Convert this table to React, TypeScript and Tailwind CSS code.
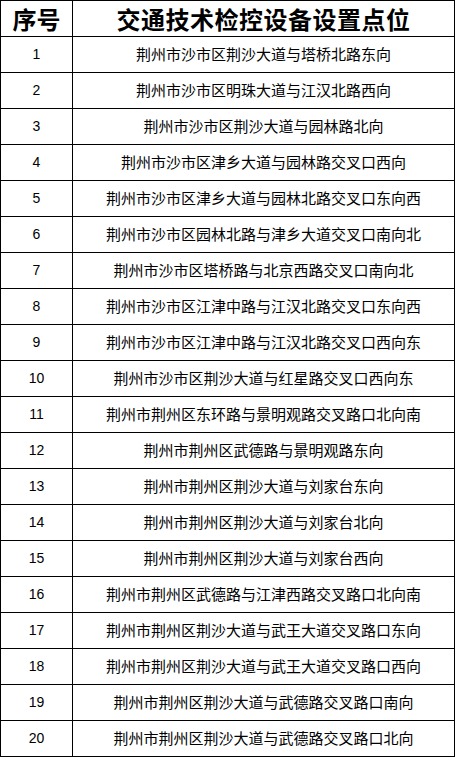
const rows: string[] = [
  "荆州市沙市区荆沙大道与塔桥北路东向",
  "荆州市沙市区明珠大道与江汉北路西向",
  "荆州市沙市区荆沙大道与园林路北向",
  "荆州市沙市区津乡大道与园林路交叉口西向",
  "荆州市沙市区津乡大道与园林北路交叉口东向西",
  "荆州市沙市区园林北路与津乡大道交叉口南向北",
  "荆州市沙市区塔桥路与北京西路交叉口南向北",
  "荆州市沙市区江津中路与江汉北路交叉口东向西",
  "荆州市沙市区江津中路与江汉北路交叉口西向东",
  "荆州市沙市区荆沙大道与红星路交叉口西向东",
  "荆州市荆州区东环路与景明观路交叉路口北向南",
  "荆州市荆州区武德路与景明观路东向",
  "荆州市荆州区荆沙大道与刘家台东向",
  "荆州市荆州区荆沙大道与刘家台北向",
  "荆州市荆州区荆沙大道与刘家台西向",
  "荆州市荆州区武德路与江津西路交叉路口北向南",
  "荆州市荆州区荆沙大道与武王大道交叉路口东向",
  "荆州市荆州区荆沙大道与武王大道交叉路口西向",
  "荆州市荆州区荆沙大道与武德路交叉路口南向",
  "荆州市荆州区荆沙大道与武德路交叉路口北向",
];

const cell = "flex h-[36px] items-center justify-center border-b border-r border-black";

export default function App() {
  return (
    <div className="min-h-screen bg-white">
      <div className="grid w-[455px] grid-cols-[72px_382px] border-l border-t border-black text-black">
        <div className={`${cell} font-['Noto_Sans_CJK_SC',sans-serif] text-[24px] font-bold`}>序号</div>
        <div className={`${cell} font-['Noto_Sans_CJK_SC',sans-serif] text-[24px] font-bold tracking-[0.5px]`}>
          交通技术检控设备设置点位
        </div>
        {rows.map((place, i) => (
          <div key={i} className="contents">
            <div className={`${cell} font-['Liberation_Sans',sans-serif] text-[14px]`}>{i + 1}</div>
            <div className={`${cell} font-['Noto_Sans_CJK_SC',sans-serif] text-[15px]`}>{place}</div>
          </div>
        ))}
      </div>
    </div>
  );
}
